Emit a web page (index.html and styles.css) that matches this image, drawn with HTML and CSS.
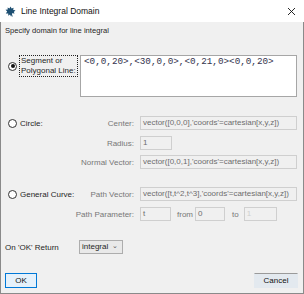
FILE: index.html
```html
<!DOCTYPE html>
<html lang="en">
  <head>
    <meta charset="UTF-8" />
    <title>Line Integral Domain</title>
    <link rel="stylesheet" href="styles.css">
  </head>
  <body>
    <div class="dialog">
      <div class="titlebar">
        <svg class="app-icon" width="11" height="11" viewBox="0 0 11 11">
          <path d="M5.5 0.5 L6.6 2.6 L8.6 1.8 L8.2 4 L10.5 4.3 L8.8 6 L9.6 7.6 L7 7.3 L6 10.5 L5 8.6 L3.2 9.8 L3.3 7.4 L0.8 7.6 L2.2 5.6 L0.5 3.8 L2.8 3.6 L2.6 1.4 L4.5 2.5 Z" fill="#1d4f72"/>
          <path d="M5.8 6 L7.2 10.5" stroke="#1d4f72" stroke-width="1"/>
        </svg>
        <span class="title">Line Integral Domain</span>
        <svg class="close" width="9" height="9" viewBox="0 0 9 9">
          <path d="M1 1 L8 8 M8 1 L1 8" stroke="#111" stroke-width="0.9"/>
        </svg>
      </div>

      <div class="content">
        <p class="intro">Specify domain for line integral</p>

        <div class="seg-row">
          <div class="opt seg-opt">
            <span class="radio checked"></span>
            <span class="focus">Segment or<br>Polygonal Line:</span>
          </div>
          <div class="textarea">&lt;0,0,20&gt;,&lt;30,0,0&gt;,&lt;0,21,0&gt;&lt;0,0,20&gt;</div>
        </div>

        <div class="row row-circle">
          <div class="opt"><span class="radio"></span>Circle:</div>
          <span class="lbl">Center:</span>
          <span class="field wide">vector([0,0,0],'coords'=cartesian[x,y,z])</span>
        </div>
        <div class="row row-radius">
          <div class="opt"></div>
          <span class="lbl">Radius:</span>
          <span class="field short">1</span>
        </div>
        <div class="row row-normal">
          <div class="opt"></div>
          <span class="lbl">Normal Vector:</span>
          <span class="field wide">vector([0,0,1],'coords'=cartesian[x,y,z])</span>
        </div>

        <div class="row row-curve">
          <div class="opt"><span class="radio"></span>General Curve:</div>
          <span class="lbl">Path Vector:</span>
          <span class="field wide">vector([t,t^2,t^3],'coords'=cartesian[x,y,z])</span>
        </div>
        <div class="row row-param">
          <div class="opt"></div>
          <span class="lbl">Path Parameter:</span>
          <span class="field param-t">t</span>
          <span class="word word-from">from</span>
          <span class="field param-from">0</span>
          <span class="word word-to">to</span>
          <span class="field param-to">1</span>
        </div>

        <div class="row row-return">
          <span class="return-lbl">On 'OK' Return</span>
          <div class="select">integral <span class="chevron">&#8964;</span></div>
        </div>

        <div class="buttons">
          <button class="btn btn-ok">OK</button>
          <button class="btn btn-cancel">Cancel</button>
        </div>
      </div>
    </div>
  </body>
</html>
```

FILE: styles.css
```css
* {
  margin: 0;
  padding: 0;
  box-sizing: border-box;
}

body {
  font-family: "Liberation Sans", Arial, sans-serif;
  font-size: 8px;
  color: #262626;
  background: #f0f0f0;
}

.dialog {
  width: 304px;
  height: 294px;
  display: flex;
  flex-direction: column;
}

.titlebar {
  height: 22px;
  background: #fff;
  display: flex;
  align-items: center;
  padding-left: 5px;
}

.app-icon {
  margin-right: 5px;
}

.title {
  font-size: 8.5px;
  color: #111;
}

.close {
  margin-left: auto;
  margin-right: 8px;
}

.content {
  flex: 1;
  display: flex;
  flex-direction: column;
  background: #f0f0f0;
  border: 1px solid #8a8a8a;
  border-top: none;
  padding: 0 6px 5px 4px;
}

.intro {
  margin-top: 4px;
  height: 10px;
  line-height: 10px;
  font-size: 7.6px;
}

.seg-row {
  display: flex;
  margin-top: 19px;
  height: 42px;
}

.opt {
  width: 70px;
  display: flex;
  align-items: center;
  flex-shrink: 0;
}

.seg-opt {
  width: 75px;
  align-self: flex-start;
  margin-top: 1px;
}

.radio {
  width: 9px;
  height: 9px;
  border: 1px solid #333;
  border-radius: 50%;
  background: #fff;
  margin: 0 3px 0 3px;
  display: flex;
  align-items: center;
  justify-content: center;
  flex-shrink: 0;
}

.radio.checked::after {
  content: "";
  width: 4px;
  height: 4px;
  border-radius: 50%;
  background: #111;
}

.focus {
  outline: 1px dotted #222;
  line-height: 10px;
  padding: 0 1px;
}

.textarea {
  flex: 1;
  background: #fff;
  border: 1px solid #a6a6a6;
  font-family: "Liberation Mono", "Courier New", monospace;
  font-size: 9.3px;
  line-height: 12px;
  padding: 0 3px;
  color: #33334d;
  white-space: nowrap;
  overflow: hidden;
}

.row {
  display: flex;
  align-items: center;
  height: 14px;
  margin-top: 6px;
}

.row-circle {
  margin-top: 19px;
}

.row-normal {
  margin-top: 5px;
}

.row-curve {
  margin-top: 18px;
}

.row-return {
  margin-top: 19px;
}

.lbl {
  width: 59px;
  text-align: right;
  color: #777;
  margin-right: 6px;
  white-space: nowrap;
}

.field {
  height: 14px;
  border: 1px solid #cfcfcf;
  background: #f0f0f0;
  color: #6d6d6d;
  padding: 0 2px;
  line-height: 12px;
  white-space: nowrap;
  overflow: hidden;
}

.wide {
  flex: 1;
}

.short {
  width: 32px;
}

.param-t {
  width: 31px;
}

.param-from {
  width: 30px;
}

.param-to {
  width: 33px;
  color: #cfcfcf;
}

.word {
  color: #777;
}

.word-from {
  margin: 0 2px 0 6px;
}

.word-to {
  margin: 0 5px 0 7px;
}

.return-lbl {
  width: 74px;
}

.select {
  width: 44px;
  height: 14px;
  border: 1px solid #adadad;
  background: #e9e9e9;
  display: flex;
  align-items: center;
  padding-left: 2px;
  line-height: 12px;
}

.chevron {
  margin-left: 4px;
  color: #555;
  font-size: 7px;
  line-height: 7px;
  margin-top: -3px;
}

.buttons {
  margin-top: auto;
  display: flex;
  justify-content: space-between;
  margin-right: -1px;
}

.btn {
  height: 15px;
  font-family: "Liberation Sans", Arial, sans-serif;
  font-size: 8px;
  color: #111;
  cursor: pointer;
}

.btn-ok {
  width: 32px;
  background: #e5f1fb;
  border: 1px solid #0078d7;
}

.btn-cancel {
  width: 44px;
  background: #e3e9ef;
  border: 1px solid #e3e9ef;
  border-top-color: #9a9a9a;
}
```
